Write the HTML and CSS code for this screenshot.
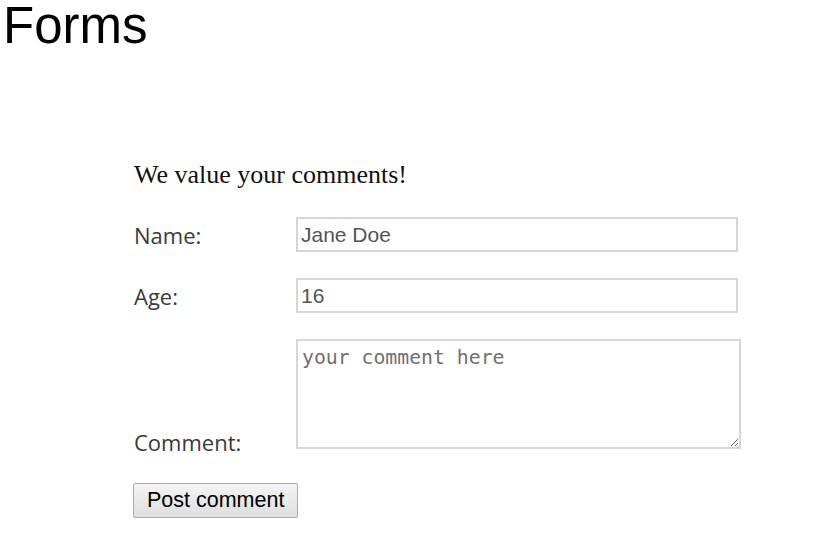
FILE: index.html
```html
<!DOCTYPE html>
<html lang="en">
<head>
<meta charset="utf-8">
<title>Forms</title>
<link rel="stylesheet" href="styles.css">
</head>
<body>
<h1 class="title">Forms</h1>
<form class="form">
  <p class="intro">We value your comments!</p>
  <div class="row">
    <label class="label" for="name">Name:</label>
    <input class="field" id="name" type="text" value="Jane Doe">
  </div>
  <div class="row">
    <label class="label" for="age">Age:</label>
    <input class="field" id="age" type="text" value="16">
  </div>
  <div class="row row-end">
    <label class="label" for="comment">Comment:</label>
    <textarea class="area" id="comment" placeholder="your comment here"></textarea>
  </div>
  <div class="actions">
    <button class="btn" type="button">Post comment</button>
  </div>
</form>
</body>
</html>
```

FILE: styles.css
```css
html, body {
  margin: 0;
  padding: 0;
  background: #ffffff;
}

.title {
  margin: 0 0 0 3px;
  font-family: "Liberation Sans", Arial, sans-serif;
  font-weight: normal;
  font-size: 51px;
  line-height: 51px;
  color: #000;
}

.form {
  margin: 109px 0 0 134px;
  display: flex;
  flex-direction: column;
  gap: 26px;
}

.intro {
  margin: 0 0 1px 0;
  font-family: "Liberation Serif", "Times New Roman", serif;
  font-size: 26px;
  line-height: 30px;
  color: #111;
}

.row {
  display: flex;
  align-items: center;
}

.row-end {
  align-items: flex-end;
}

.label {
  width: 162px;
  flex: none;
  font-family: "Open Sans", sans-serif;
  font-size: 22px;
  color: #3a3a3a;
}

.field {
  box-sizing: border-box;
  width: 442px;
  height: 35px;
  margin: 0;
  padding: 0 3px;
  border: 2px solid #d6d6d6;
  border-radius: 0;
  outline: none;
  font-family: "Liberation Sans", Arial, sans-serif;
  font-size: 21px;
  color: #555;
  background: #fff;
}

.area {
  box-sizing: border-box;
  width: 445px;
  height: 110px;
  margin: 0 0 8px 0;
  padding: 4px 4px;
  border: 2px solid #d6d6d6;
  border-radius: 0;
  outline: none;
  font-family: "DejaVu Sans Mono", "Liberation Mono", monospace;
  font-size: 19.8px;
  line-height: 26px;
  color: #555;
  background: #fff;
}

.area::placeholder {
  color: #6f6f6f;
}

.actions {
  display: flex;
}

.btn {
  box-sizing: border-box;
  height: 35px;
  margin: 0 0 0 -1px;
  padding: 0 13px;
  border: 1px solid #acacac;
  border-radius: 2px;
  background: linear-gradient(#f4f4f4, #dedede);
  font-family: "Liberation Sans", Arial, sans-serif;
  font-size: 21.5px;
  color: #000;
}
```
